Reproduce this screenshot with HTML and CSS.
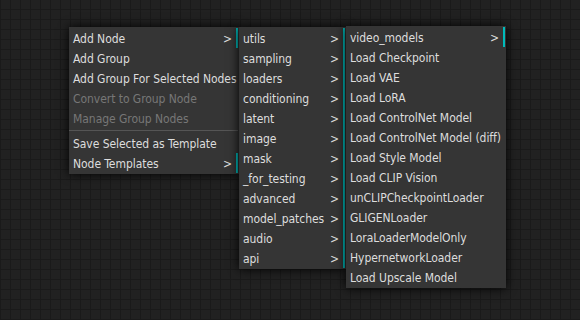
FILE: index.html
```html
<!DOCTYPE html>
<html lang="en">
<head>
  <meta charset="UTF-8" />
  <title>Canvas Menu</title>
  <link rel="stylesheet" href="styles.css">
</head>
<body>
  <div class="canvas">
    <div class="menus">
      <div class="litemenu main">
        <div class="entry submenu">Add Node</div>
        <div class="entry">Add Group</div>
        <div class="entry">Add Group For Selected Nodes</div>
        <div class="entry disabled">Convert to Group Node</div>
        <div class="entry disabled">Manage Group Nodes</div>
        <div class="separator"></div>
        <div class="entry">Save Selected as Template</div>
        <div class="entry submenu">Node Templates</div>
      </div>

      <div class="litemenu categories">
        <div class="entry submenu">utils</div>
        <div class="entry submenu">sampling</div>
        <div class="entry submenu">loaders</div>
        <div class="entry submenu">conditioning</div>
        <div class="entry submenu">latent</div>
        <div class="entry submenu">image</div>
        <div class="entry submenu">mask</div>
        <div class="entry submenu">_for_testing</div>
        <div class="entry submenu">advanced</div>
        <div class="entry submenu">model_patches</div>
        <div class="entry submenu">audio</div>
        <div class="entry submenu">api</div>
      </div>

      <div class="litemenu loaders">
        <div class="entry submenu">video_models</div>
        <div class="entry">Load Checkpoint</div>
        <div class="entry">Load VAE</div>
        <div class="entry">Load LoRA</div>
        <div class="entry">Load ControlNet Model</div>
        <div class="entry">Load ControlNet Model (diff)</div>
        <div class="entry">Load Style Model</div>
        <div class="entry">Load CLIP Vision</div>
        <div class="entry">unCLIPCheckpointLoader</div>
        <div class="entry">GLIGENLoader</div>
        <div class="entry">LoraLoaderModelOnly</div>
        <div class="entry">HypernetworkLoader</div>
        <div class="entry">Load Upscale Model</div>
      </div>
    </div>
  </div>
</body>
</html>
```

FILE: styles.css
```css
body {
  margin: 0;
  padding: 0;
  background-color: #222;
  font-family: "DejaVu Sans Condensed", "DejaVu Sans", sans-serif;
  font-stretch: condensed;
}
.canvas {
  width: 580px;
  height: 320px;
  overflow: hidden;
  background-color: #212121;
  background-image:
    repeating-linear-gradient(90deg, #1a1a1a 0 1px, transparent 1px 10px),
    repeating-linear-gradient(0deg, #1a1a1a 0 1px, transparent 1px 10px);
}
.menus {
  display: flex;
  align-items: flex-start;
  padding: 27px 0 0 69px;
}
.litemenu {
  background-color: #353535;
  box-shadow: 0 0 10px #000;
  padding: 1px 1px 1px 0;
  box-sizing: border-box;
}
.litemenu.main {
  width: 170px;
  position: relative;
  z-index: 1;
}
.litemenu.categories {
  width: 107px;
  position: relative;
  z-index: 2;
}
.litemenu.loaders {
  width: 160px;
  margin-top: -1px;
  position: relative;
  z-index: 3;
}
.entry {
  height: 20px;
  line-height: 23px;
  padding-left: 4px;
  color: #ddd;
  font-size: 12px;
  letter-spacing: -0.05px;
  white-space: nowrap;
  overflow: hidden;
  position: relative;
}
.entry.disabled {
  color: #777;
}
.entry.submenu {
  border-right: 2px solid #0bb;
}
.entry.submenu::after {
  content: ">";
  position: absolute;
  right: 4px;
  top: 0;
  color: #ddd;
}
.separator {
  height: 1px;
  background-color: #555;
  margin: 2px 0;
}
```
